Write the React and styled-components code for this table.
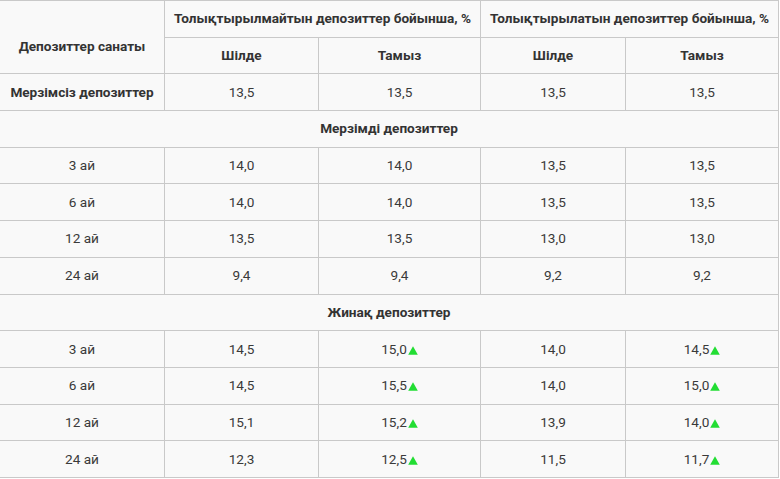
import styled, { createGlobalStyle } from "styled-components";

const GlobalStyle = createGlobalStyle`
    html, body {
        margin:0;
        padding:0;
        background:#fff;
    }
    body {
        font-family:Roboto, "Liberation Sans", sans-serif;
        overflow:hidden;
    }
`;

const widths = [165, 154, 162, 145, 153];

const fixed = [
    ["3 ай", "14,0", "14,0", "13,5", "13,5"],
    ["6 ай", "14,0", "14,0", "13,5", "13,5"],
    ["12 ай", "13,5", "13,5", "13,0", "13,0"],
    ["24 ай", "9,4", "9,4", "9,2", "9,2"],
];

const savings = [
    ["3 ай", "14,5", "15,0+", "14,0", "14,5+"],
    ["6 ай", "14,5", "15,5+", "14,0", "15,0+"],
    ["12 ай", "15,1", "15,2+", "13,9", "14,0+"],
    ["24 ай", "12,3", "12,5+", "11,5", "11,7+"],
];

function Up() {
    return (
        <Arrow viewBox="0 0 10 9" aria-hidden="true">
            <path d="M5 0.3 L9.8 8.8 L0.2 8.8 Z" />
        </Arrow>
    );
}

function Value({ v }) {
    if (v.endsWith("+")) {
        return (
            <>
                {v.slice(0, -1)}
                <Up />
            </>
        );
    }
    return v;
}

function Rows({ data }) {
    return data.map((row) => (
        <tr key={row[0]}>
            {row.map((v, i) => (
                <Cell key={i}>
                    <Value v={v} />
                </Cell>
            ))}
        </tr>
    ));
}

function App() {
    return (
        <>
            <GlobalStyle />
            <Table>
                <colgroup>
                    {widths.map((w, i) => (
                        <col key={i} style={{ width: w }} />
                    ))}
                </colgroup>
                <thead>
                    <tr>
                        <Head rowSpan={2} $low>Депозиттер санаты</Head>
                        <Head colSpan={2}>Толықтырылмайтын депозиттер бойынша, %</Head>
                        <Head colSpan={2}>Толықтырылатын депозиттер бойынша, %</Head>
                    </tr>
                    <tr>
                        <Head>Шілде</Head>
                        <Head>Тамыз</Head>
                        <Head>Шілде</Head>
                        <Head>Тамыз</Head>
                    </tr>
                </thead>
                <tbody>
                    <tr>
                        <Head as="td">Мерзімсіз депозиттер</Head>
                        <Cell>13,5</Cell>
                        <Cell>13,5</Cell>
                        <Cell>13,5</Cell>
                        <Cell>13,5</Cell>
                    </tr>
                    <tr>
                        <Head as="td" colSpan={5}>Мерзімді депозиттер</Head>
                    </tr>
                    <Rows data={fixed} />
                    <tr>
                        <Head as="td" colSpan={5}>Жинақ депозиттер</Head>
                    </tr>
                    <Rows data={savings} />
                </tbody>
            </Table>
        </>
    );
}

export default App;

const Table = styled.table`
    border-collapse:collapse;
    table-layout:fixed;
    width:780px;
    margin:0 0 0 -1px;
    background:#f9f9f9;
    font-size:13.6px;
    color:#3a3a3a;
    tr {
        height:36.7px;
    }
`;

const Cell = styled.td`
    border:1px solid #c9c9c9;
    padding:0 6px;
    text-align:center;
    vertical-align:middle;
    white-space:nowrap;
    line-height:15px;
    box-sizing:border-box;
`;

const Head = styled.th`
    border:1px solid #c9c9c9;
    padding:${(p) => (p.$low ? "18px 6px 0" : "0 6px")};
    text-align:center;
    vertical-align:middle;
    white-space:nowrap;
    font-weight:700;
    color:#333;
    line-height:15px;
    box-sizing:border-box;
`;

const Arrow = styled.svg`
    width:10px;
    height:9px;
    margin-left:1px;
    fill:#22dd33;
    vertical-align:-1px;
`;
